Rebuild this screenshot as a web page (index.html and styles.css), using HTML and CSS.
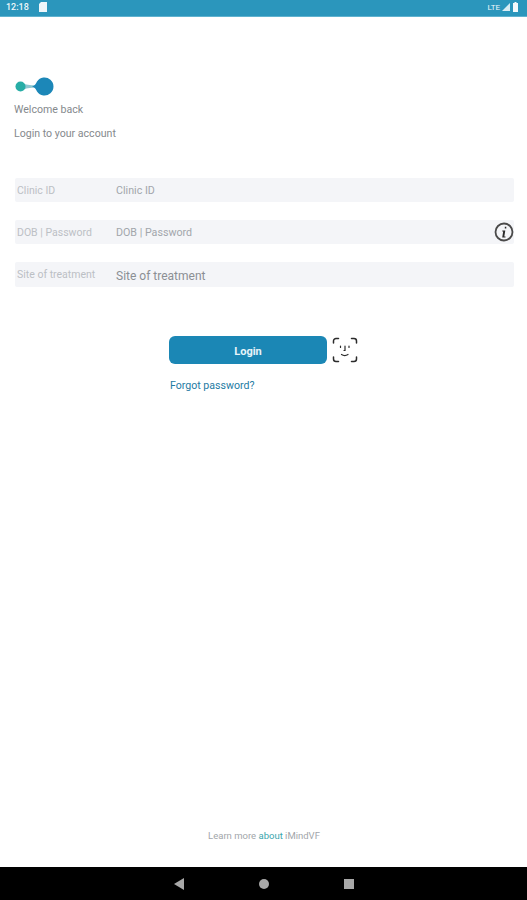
FILE: index.html
```html
<!DOCTYPE html>
<html lang="en">
<head>
    <meta charset="UTF-8">
    <meta name="viewport" content="width=device-width, initial-scale=1.0">
    <title>iMindVF</title>
    <link rel="stylesheet" href="styles.css">
</head>
<body>
    <div class="status-bar">
        <div class="status-left">
            <span class="clock">12:18</span>
            <svg class="sd-icon" width="8" height="10" viewBox="0 0 8 10"><path d="M2 0h6v10H0V2z" fill="#eef6fa"/></svg>
        </div>
        <div class="status-right">
            <span class="net">LTE</span>
            <svg width="8" height="8" viewBox="0 0 8 8"><path d="M8 0v8H0z" fill="#d9ecf3"/></svg>
            <svg class="battery" width="5" height="10" viewBox="0 0 5 10"><path d="M1.500 0h2v1H5v9H0V1h1.500z" fill="#f4fafc"/></svg>
        </div>
    </div>

    <div class="page">
        <div class="brand">
            <svg class="logo" width="40" height="20" viewBox="0 0 40 20">
                <path d="M6 6C10 7 13 8.500 20 8.300V10.700C13 10.500 10 12 6 13z" fill="#8cc6d0"/>
                <circle cx="5.500" cy="9.500" r="5" fill="#27ada6"/>
                <path d="M17 9.500C20 8.800 21 6.500 22 4.500A9 9 0 1 1 22 14.500C21 12.500 20 10.200 17 9.500z" fill="#1c87b8"/>
            </svg>
            <p class="intro">Welcome back</p>
            <p class="intro intro-second">Login to your account</p>
        </div>

        <div class="form">
            <div class="field">
                <span class="field-label">Clinic ID</span>
                <span class="field-hint">Clinic ID</span>
            </div>
            <div class="field">
                <span class="field-label">DOB | Password</span>
                <span class="field-hint">DOB | Password</span>
                <svg class="info-icon" width="20" height="20" viewBox="0 0 20 20">
                    <circle cx="10" cy="10" r="8.500" fill="none" stroke="#4a4a4a" stroke-width="1.800"/>
                    <path d="M10.800 4.800h1.500v1.700h-1.500zM8.300 8.400h3l-1 6h1.200v1H8.200l1-6H8.300z" fill="#2a2a2a"/>
                </svg>
            </div>
            <div class="field field-tall">
                <span class="field-label">Site of treatment</span>
                <span class="field-hint field-hint-big">Site of treatment</span>
            </div>
        </div>

        <div class="actions">
            <div class="login-row">
                <button class="login-button">Login</button>
                <svg class="face-icon" width="26" height="26" viewBox="0 0 26 26" fill="none" stroke="#2b2b2b" stroke-width="1.500" stroke-linecap="round">
                    <path d="M1.500 6V4a2.500 2.500 0 0 1 2.500-2.500h2.500M19.500 1.500H22a2.500 2.500 0 0 1 2.500 2.500v2M24.500 20v2a2.500 2.500 0 0 1-2.500 2.500h-2.500M6.500 24.500H4a2.500 2.500 0 0 1-2.500-2.500v-2"/>
                    <path d="M8.500 9v1.500M17 9v1.500M13 9v4.500h-1M9.500 17.500c2 1.300 4.500 1.300 6.500 0" stroke-width="1.200"/>
                </svg>
            </div>
            <a class="forgot" href="#">Forgot password?</a>
        </div>

        <div class="footer">Learn more <a href="#">about</a> iMindVF</div>
    </div>

    <div class="nav-bar">
        <svg width="12" height="12" viewBox="0 0 12 12"><path d="M11 0v12L1 6z" fill="#a8a8a8"/></svg>
        <svg width="12" height="12" viewBox="0 0 12 12"><circle cx="6" cy="6" r="5" fill="#a8a8a8"/></svg>
        <svg width="12" height="12" viewBox="0 0 12 12"><path d="M1 1h10v10H1z" fill="#a8a8a8"/></svg>
    </div>
</body>
</html>
```

FILE: styles.css
```css
* {
    margin: 0;
    padding: 0;
    box-sizing: border-box;
}

body {
    width: 527px;
    height: 900px;
    display: flex;
    flex-direction: column;
    background: #fff;
    font-family: Roboto, sans-serif;
    overflow: hidden;
}

/* status bar */
.status-bar {
    height: 17px;
    flex: none;
    display: flex;
    align-items: center;
    justify-content: space-between;
    padding: 0 9px 2px 6px;
    background: #2b96bc;
    border-bottom: 1px solid #5fb2cf;
    color: #eef6fa;
}

.status-left,
.status-right {
    display: flex;
    align-items: center;
}

.clock {
    font-size: 9px;
    font-weight: 500;
}

.sd-icon {
    margin-left: 10px;
}

.status-right {
    gap: 1px;
}

.net {
    font-size: 8px;
    margin-right: 1px;
}

.battery {
    margin-left: 2px;
}

/* main */
.page {
    flex: 1;
    display: flex;
    flex-direction: column;
    padding: 0 13px 0 14px;
}

.brand {
    padding-top: 60px;
}

.logo {
    display: block;
    margin-left: 1px;
}

.intro {
    margin-top: 6px;
    font-size: 10.6px;
    line-height: 14px;
    color: #85898d;
}

.intro-second {
    margin-top: 10px;
}

.form {
    margin: 37px 0 0 1px;
    display: flex;
    flex-direction: column;
    gap: 18px;
}

.field {
    height: 24px;
    display: flex;
    align-items: center;
    position: relative;
    padding-left: 2px;
    background: #f4f5f8;
    border-radius: 2px;
}

.field-tall {
    height: 25px;
    padding-top: 2px;
}

.field-label {
    width: 99px;
    flex: none;
    font-size: 10.5px;
    color: #bcc0c5;
}

.field-tall .field-label {
    margin-top: -3px;
}

.field-hint {
    font-size: 10.7px;
    color: #a2a6ab;
}

.field-hint-big {
    font-size: 12px;
    color: #8b8f94;
}

.info-icon {
    position: absolute;
    right: 0;
    top: 2px;
}

.actions {
    margin-top: 49px;
    padding-left: 155px;
}

.login-row {
    display: flex;
    align-items: center;
    gap: 5px;
}

.login-button {
    width: 158px;
    height: 28px;
    padding-top: 2px;
    border: none;
    border-radius: 6px;
    background: #1b87b5;
    color: #e8f4f9;
    font-family: Roboto, sans-serif;
    font-size: 11px;
    font-weight: 700;
}

.forgot {
    display: block;
    margin: 15px 0 0 1px;
    font-size: 10.6px;
    line-height: 14px;
    color: #1e7ba3;
    text-decoration: none;
}

.footer {
    margin-top: auto;
    padding-bottom: 25px;
    text-align: center;
    font-size: 9.5px;
    line-height: 12px;
    color: #a2a6aa;
}

.footer a {
    color: #3aa5ad;
    text-decoration: none;
}

/* nav bar */
.nav-bar {
    height: 33px;
    flex: none;
    display: flex;
    align-items: center;
    justify-content: center;
    gap: 73px;
    background: #000;
}
```
